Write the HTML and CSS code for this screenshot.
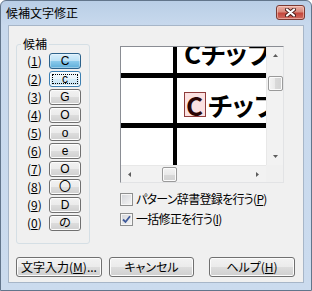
FILE: index.html
```html
<!DOCTYPE html>
<html>
<head>
    <title>候補文字修正</title>
    <link rel="stylesheet" href="styles.css">
</head>
<body>
    <div class="window">
        <div class="titlebar">
            <span class="title">候補文字修正</span>
            <button class="close">
                <svg width="11" height="9" viewBox="0 0 11 9">
                    <path d="M2 1.5 L9 7.5 M9 1.5 L2 7.5" stroke="#4a1d18" stroke-width="4" stroke-linecap="round"/>
                    <path d="M2 1.5 L9 7.5 M9 1.5 L2 7.5" stroke="#fff" stroke-width="2.2" stroke-linecap="round"/>
                </svg>
            </button>
        </div>

        <div class="client">
            <div class="main">
                <fieldset class="group">
                    <legend>候補</legend>
                    <div class="cand-list">
                        <div class="cand"><span class="key">(<u>1</u>)</span><button class="btn cand-btn pressed">C</button></div>
                        <div class="cand"><span class="key">(<u>2</u>)</span><button class="btn cand-btn focused">c</button></div>
                        <div class="cand"><span class="key">(<u>3</u>)</span><button class="btn cand-btn">G</button></div>
                        <div class="cand"><span class="key">(<u>4</u>)</span><button class="btn cand-btn">O</button></div>
                        <div class="cand"><span class="key">(<u>5</u>)</span><button class="btn cand-btn">o</button></div>
                        <div class="cand"><span class="key">(<u>6</u>)</span><button class="btn cand-btn">e</button></div>
                        <div class="cand"><span class="key">(<u>7</u>)</span><button class="btn cand-btn">O</button></div>
                        <div class="cand"><span class="key">(<u>8</u>)</span><button class="btn cand-btn">〇</button></div>
                        <div class="cand"><span class="key">(<u>9</u>)</span><button class="btn cand-btn">D</button></div>
                        <div class="cand"><span class="key">(<u>0</u>)</span><button class="btn cand-btn">の</button></div>
                    </div>
                </fieldset>

                <div class="side">
                    <div class="preview">
                        <div class="view">
                            <div class="cell"></div>
                            <div class="cell text top">Cチップ</div>
                            <div class="cell"></div>
                            <div class="cell text mid"><span class="hit">C</span><span>チップ</span></div>
                            <div class="cell"></div>
                            <div class="cell"></div>
                        </div>
                        <div class="vscroll">
                            <span class="arrow"><svg width="5" height="3"><path d="M0 3 L2.5 0 L5 3 Z" fill="#5c5c5c"/></svg></span>
                            <span class="thumb v"></span>
                            <span class="arrow end"><svg width="5" height="3"><path d="M0 0 L2.5 3 L5 0 Z" fill="#5c5c5c"/></svg></span>
                        </div>
                        <div class="hscroll">
                            <span class="arrow"><svg width="3" height="5"><path d="M3 0 L0 2.5 L3 5 Z" fill="#5c5c5c"/></svg></span>
                            <span class="thumb h"></span>
                            <span class="arrow end"><svg width="3" height="5"><path d="M0 0 L3 2.5 L0 5 Z" fill="#5c5c5c"/></svg></span>
                        </div>
                        <div class="corner"></div>
                    </div>

                    <div class="check first">
                        <span class="box"></span>
                        <span class="label">パターン辞書登録を行う(<u>P</u>)</span>
                    </div>
                    <div class="check">
                        <span class="box">
                            <svg width="9" height="9" viewBox="0 0 9 9"><path d="M1 4.5 L3.5 7 L8 1.2" fill="none" stroke="#3f5a9a" stroke-width="1.8"/></svg>
                        </span>
                        <span class="label">一括修正を行う(<u>I</u>)</span>
                    </div>
                </div>
            </div>

            <div class="actions">
                <button class="btn action">文字入力(<u>M</u>)...</button>
                <button class="btn action cancel">キャンセル</button>
                <button class="btn action help">ヘルプ(<u>H</u>)</button>
            </div>
        </div>
    </div>
</body>
</html>
```

FILE: styles.css
```css
* {
    box-sizing: border-box;
}
body {
    margin: 0;
    font-family: "Noto Sans CJK JP", "Noto Sans", sans-serif;
    font-size: 12px;
    color: #000;
}
.window {
    width: 312px;
    height: 291px;
    border: 1px solid #62758b;
    border-radius: 6px 6px 0 0;
    background: linear-gradient(#b9cee6, #c8d9ed 24px, #cbdbee);
    padding: 0 7px 7px;
    display: flex;
    flex-direction: column;
}
.titlebar {
    height: 24px;
    margin: 0 -7px;
    padding: 0 6px 0 5px;
    display: flex;
    align-items: center;
    justify-content: space-between;
}
.title {
    line-height: 14px;
}
.close {
    width: 29px;
    height: 15px;
    margin-top: -2px;
    padding: 0;
    border: 1px solid #7b3a33;
    border-radius: 3px;
    background: linear-gradient(#ebb1a6, #d98a7d 45%, #c4473c 55%, #cf6c61);
    box-shadow: inset 0 0 0 1px rgba(255, 220, 210, 0.5);
    display: flex;
    align-items: center;
    justify-content: center;
}
.client {
    flex: 1;
    background: #f0f0f0;
    border: 1px solid #a7b6c8;
    padding: 11px 7px 0;
}
.main {
    display: flex;
    align-items: flex-start;
}
.group {
    width: 74px;
    margin: 0;
    padding: 2px 0 12px 0;
    border: 1px solid #d5dfe5;
    border-radius: 3px;
}
.group legend {
    margin-left: 4px;
    padding: 0 2px;
    line-height: 14px;
}
.cand-list {
    display: flex;
    flex-direction: column;
    gap: 2px;
    padding-left: 10px;
}
.cand {
    display: flex;
    align-items: center;
    height: 16px;
}
.key {
    width: 22px;
    line-height: 16px;
}
.btn {
    font: inherit;
    color: #000;
    padding: 0;
    border: 1px solid #707070;
    border-radius: 3px;
    background: linear-gradient(#f2f2f2, #ebebeb 50%, #dddddd 50%, #cfcfcf);
    box-shadow: inset 0 0 0 1px #fcfcfc;
}
.cand-btn {
    width: 32px;
    height: 16px;
    font-family: "Liberation Sans", "Noto Sans CJK JP", sans-serif;
    font-size: 12px;
    line-height: 13px;
}
.cand-btn.pressed {
    border-color: #2c628b;
    background: linear-gradient(#d8eefb, #b9e0f5 50%, #8ccbec 50%, #5eaed9);
    box-shadow: inset 0 0 0 1px rgba(255, 255, 255, 0.35);
}
.cand-btn.focused {
    border-color: #3c7fb1;
    background: linear-gradient(#f4fafd, #e8f4fb 50%, #d6ecf8 50%, #c8e4f4);
    outline: 1px dotted #000;
    outline-offset: -4px;
}
.side {
    margin-left: 30px;
    padding-top: 9px;
}
.preview {
    width: 164px;
    border: 1px solid;
    border-color: #8a8d94 #e2e3e5 #e2e3e5 #8a8d94;
    display: grid;
    grid-template-columns: 145px 17px;
    grid-template-rows: 118px 17px;
    background: #fff;
}
.view {
    background: #000;
    display: grid;
    grid-template-columns: 52px 89px;
    grid-template-rows: 26px 45px 37px;
    column-gap: 4px;
    row-gap: 5px;
    overflow: hidden;
}
.cell {
    background: #fff;
    overflow: hidden;
}
.cell.text {
    display: flex;
    align-items: flex-end;
    padding: 0 0 7px 7px;
    font-size: 26px;
    font-weight: 700;
    line-height: 26px;
    white-space: nowrap;
    font-feature-settings: "palt";
}
.cell.text.mid {
    align-items: center;
    padding: 8px 0 0 7px;
}
.hit {
    display: inline-block;
    height: 25px;
    line-height: 23px;
    border: 1px solid #8e3c3c;
    background: #fbe1e1;
    color: #2a0505;
    padding: 0 2px 0 1px;
    margin-right: 2px;
}
.vscroll,
.hscroll {
    display: flex;
    background: #f2f2f2;
}
.vscroll {
    flex-direction: column;
    align-items: center;
    border-left: 1px solid #e8e8e8;
}
.hscroll {
    align-items: center;
    border-top: 1px solid #e8e8e8;
}
.corner {
    background: #f0f0f0;
}
.arrow {
    width: 17px;
    height: 17px;
    flex: none;
    display: flex;
    align-items: center;
    justify-content: center;
}
.vscroll .arrow {
    width: 16px;
}
.hscroll .arrow {
    height: 16px;
}
.arrow.end {
    margin: auto 0 0 0;
}
.hscroll .arrow.end {
    margin: 0 0 0 auto;
}
.thumb {
    flex: none;
    width: 15px;
    height: 15px;
    border: 1px solid #9a9a9a;
    border-radius: 2px;
    background: linear-gradient(90deg, #f4f4f4, #e9e9e9 50%, #d9d9d9 50%, #d2d2d2);
    box-shadow: inset 0 0 0 1px #fbfbfb;
}
.thumb.v {
    margin-top: 12px;
}
.thumb.h {
    margin-left: 24px;
    background: linear-gradient(#f4f4f4, #e9e9e9 50%, #d9d9d9 50%, #d2d2d2);
}
.check {
    display: flex;
    align-items: center;
    height: 20px;
}
.check.first {
    margin-top: 6px;
}
.box {
    width: 13px;
    height: 13px;
    margin-right: 3px;
    border: 1px solid #8e8f8f;
    background: linear-gradient(135deg, #d2d4d8, #f6f6f6);
    box-shadow: inset 0 0 0 1px #f6f6f6;
    display: flex;
    align-items: center;
    justify-content: center;
}
.label {
    font-feature-settings: "palt";
    letter-spacing: -0.7px;
    line-height: 14px;
}
.actions {
    display: flex;
    margin-top: 13px;
}
.btn.action {
    width: 86px;
    height: 20px;
    line-height: 16px;
    font-feature-settings: "palt";
}
.btn.cancel {
    width: 85px;
    margin-left: 7px;
}
.btn.help {
    margin-left: 15px;
}
```
